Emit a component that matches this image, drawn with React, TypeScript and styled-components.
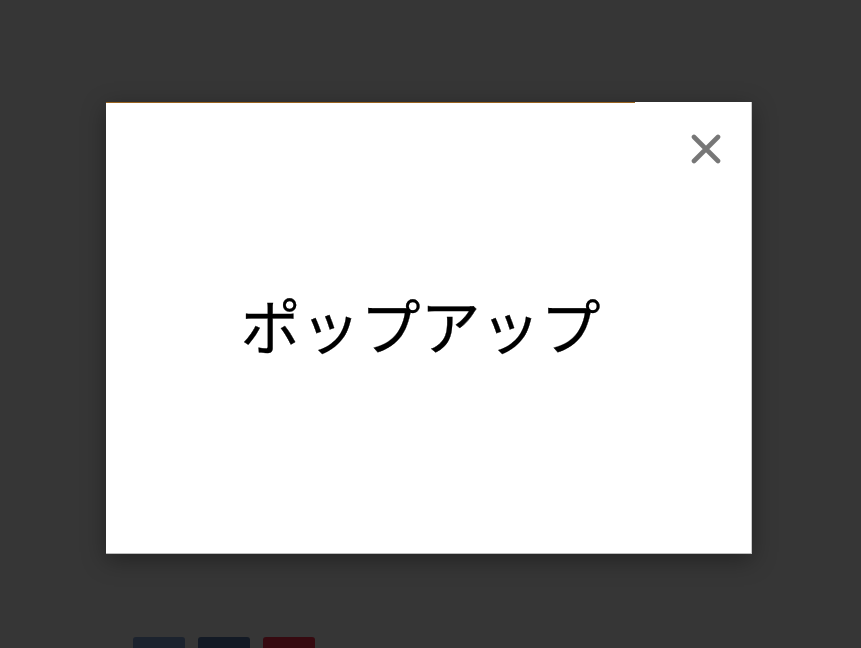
import styled, { createGlobalStyle } from "styled-components";

const GlobalStyle = createGlobalStyle`
  html, body {
    margin: 0;
    padding: 0;
    background: #363636;
    font-family: "Noto Sans CJK JP", "Noto Sans", sans-serif;
  }
`;

const Page = styled.div`
  height: 648px;
  box-sizing: border-box;
  padding: 637px 0 0 133px;
  display: flex;
  gap: 13px;
  overflow: hidden;
`;

const PageButton = styled.div<{ $color: string }>`
  width: 52px;
  height: 30px;
  border-radius: 3px;
  background: ${(p) => p.$color};
`;

const Overlay = styled.div`
  position: fixed;
  inset: 0;
  display: flex;
  align-items: flex-start;
  padding: 102px 0 0 106px;
`;

const Modal = styled.div`
  position: relative;
  width: 646px;
  height: 452px;
  background: #fff;
  border-right: 1px solid #c8c8c8;
  border-bottom: 1px solid #bdbdbd;
  box-sizing: border-box;
  box-shadow: 0 6px 22px rgba(0, 0, 0, 0.35);
  display: flex;
  align-items: center;
  justify-content: center;
  padding: 0 16px 8px 0;
`;

const TimerBar = styled.div<{ $pct: number }>`
  position: absolute;
  left: 0;
  top: 0;
  height: 1px;
  width: ${(p) => p.$pct}%;
  background: #9a6420;
`;

const CloseButton = styled.button`
  position: absolute;
  top: 31px;
  right: 29px;
  width: 32px;
  height: 32px;
  padding: 0;
  border: none;
  background: none;
  cursor: pointer;
  display: flex;
  align-items: center;
  justify-content: center;
`;

const Title = styled.h1`
  margin: 0;
  font-size: 60px;
  font-weight: 400;
  color: #000;
  line-height: 1;
  -webkit-text-stroke: 0.3px #000;
`;

export default function App() {
  return (
    <>
      <GlobalStyle />
      <Page>
        <PageButton $color="#1c232e" />
        <PageButton $color="#131a25" />
        <PageButton $color="#360a10" />
      </Page>
      <Overlay>
        <Modal>
          <TimerBar $pct={82} />
          <CloseButton aria-label="close">
            <svg width="30" height="30" viewBox="0 0 30 30">
              <path
                d="M3 3 L27 27 M27 3 L3 27"
                stroke="#777"
                strokeWidth="4.6"
                strokeLinecap="round"
              />
            </svg>
          </CloseButton>
          <Title>ポップアップ</Title>
        </Modal>
      </Overlay>
    </>
  );
}
